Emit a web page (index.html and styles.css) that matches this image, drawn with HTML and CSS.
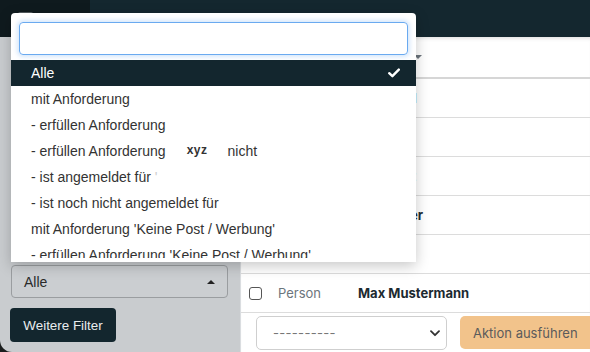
FILE: index.html
```html
<!DOCTYPE html>
<html lang="de">
<head>
<meta charset="utf-8">
<title>Filter</title>
<link rel="stylesheet" href="styles.css">
</head>
<body>
<div class="app">
  <header class="topbar">
    <div class="brand"><span class="logo"></span></div>
    <div class="topbar-rest"></div>
  </header>
  <div class="content">
    <aside class="sidebar">
      <div class="select-fake">
        <span>Alle</span>
        <span class="caret-up"></span>
      </div>
      <button class="btn-dark">Weitere Filter</button>
    </aside>
    <main class="main">
      <div class="row head">
        <span class="col-check"></span>
        <span class="col-type"></span>
        <span class="col-name">Name</span>
        <span class="sort-caret"></span>
      </div>
      <div class="row"><span class="col-check"></span><span class="col-type"></span><span class="col-name">Bernhard</span></div>
      <div class="row"><span class="col-check"></span><span class="col-type"></span><span class="col-name">Anna</span></div>
      <div class="row"><span class="col-check"></span><span class="col-type"></span><span class="col-name">Ruprecht</span></div>
      <div class="row"><span class="col-check"></span><span class="col-type"></span><span class="col-name">Alexander</span></div>
      <div class="row"><span class="col-check"></span><span class="col-type"></span><span class="col-name">Eva</span></div>
      <div class="row"><span class="col-check"><span class="checkbox"></span></span><span class="col-type">Person</span><span class="col-name">Max Mustermann</span></div>
      <div class="actions">
        <div class="action-select"><span>----------</span>
          <svg class="chev" width="10" height="7" viewBox="0 0 10 7"><path d="M1 1.2 L5 5.2 L9 1.2" fill="none" stroke="#333" stroke-width="1.8" stroke-linecap="round" stroke-linejoin="round"/></svg>
        </div>
        <button class="btn-action">Aktion ausführen</button>
      </div>
    </main>
  </div>

  <div class="dropdown">
    <div class="search-wrap"><div class="search"></div></div>
    <ul class="options">
      <li class="opt active"><span>Alle</span>
        <svg class="check" width="12" height="10" viewBox="0 0 12 10"><path d="M1.2 5.2 L4.4 8.2 L10.8 1.6" fill="none" stroke="#fff" stroke-width="2.4" stroke-linecap="round" stroke-linejoin="round"/></svg>
      </li>
      <li class="opt">mit Anforderung</li>
      <li class="opt">- erfüllen Anforderung</li>
      <li class="opt">- erfüllen Anforderung<b class="tag">xyz</b>nicht</li>
      <li class="opt">- ist angemeldet für <span class="faint">'</span></li>
      <li class="opt">- ist noch nicht angemeldet für</li>
      <li class="opt">mit Anforderung 'Keine Post / Werbung'</li>
      <li class="opt">- erfüllen Anforderung 'Keine Post / Werbung'</li>
    </ul>
  </div>
</div>
</body>
</html>
```

FILE: styles.css
```css
* { box-sizing: border-box; }
html, body { margin: 0; padding: 0; }
body {
  width: 590px;
  height: 352px;
  overflow: hidden;
  background: #1b1d1e;
  font-family: "Liberation Sans", Arial, sans-serif;
}
.app { position: relative; width: 590px; height: 352px; display: flex; flex-direction: column; }

.topbar { height: 37px; display: flex; flex: none; }
.brand { width: 90px; background: #0f1a1e; padding: 12px 0 0 18px; }
.logo { display: block; width: 15px; height: 15px; background: #535b5f; border-radius: 2px; }
.topbar-rest { flex: 1; background: #14272f; }

.content { flex: 1; display: flex; min-height: 0; }
.sidebar {
  width: 241px;
  background: #c9cccf;
  border-right: 1px solid #dadde0;
  border-bottom-left-radius: 12px;
  display: flex;
  flex-direction: column;
  justify-content: flex-end;
  gap: 10px;
  padding: 0 12px 10px 10px;
}
.select-fake {
  height: 33px;
  margin-left: 1px;
  border: 1px solid #9a9da0;
  border-radius: 4px;
  background: #cbced1;
  display: flex;
  align-items: center;
  justify-content: space-between;
  padding: 0 12px 0 12px;
  font-size: 14px;
  color: #2a2a2a;
}
.caret-up {
  width: 0; height: 0;
  border-left: 4px solid transparent;
  border-right: 4px solid transparent;
  border-bottom: 4px solid #222;
}
.btn-dark {
  align-self: flex-start;
  height: 34px;
  width: 106px;
  border: 0;
  border-radius: 4px;
  background: #13262e;
  color: #e9ecee;
  font-family: "Liberation Sans", Arial, sans-serif;
  font-size: 13.4px;
  padding: 0;
}

.main { flex: 1; background: #fff; font-family: Inter, "Liberation Sans", sans-serif; font-size: 13px; box-shadow: inset 0 4px 4px -3px rgba(0,0,0,.15); }
.row {
  height: 39px;
  display: flex;
  align-items: center;
  border-bottom: 1px solid #dcdcdc;
  padding-left: 7px;
}
.row.head { height: 42px; border-bottom: 2px solid #d6d6d6; }
.col-check { width: 30px; display: flex; }
.col-type { width: 80px; color: #6c757d; }
.col-name { font-weight: 700; color: #1c2a30; }
.head .col-name { width: 56px; }
.sort-caret {
  width: 0; height: 0;
  border-left: 4px solid transparent;
  border-right: 4px solid transparent;
  border-top: 4px solid #6c757d;
}
.checkbox { width: 13px; height: 13px; border: 1px solid #555; border-radius: 3px; background: #fff; margin-left: 1px; }

.actions { display: flex; gap: 13px; padding: 3px 0 0 15px; }
.action-select {
  width: 191px;
  height: 34px;
  border: 1px solid #cfcfcf;
  border-radius: 5px;
  display: flex;
  align-items: center;
  justify-content: space-between;
  padding: 0 6px 0 16px;
  color: #777;
  font-size: 13px;
  letter-spacing: 0.3px;
}
.btn-action {
  height: 33px;
  flex: 1;
  border: 0;
  border-radius: 5px 0 0 5px;
  background: #f2c38b;
  color: #5b5b5b;
  font-family: Inter, "Liberation Sans", sans-serif;
  font-size: 13px;
  text-align: left;
  padding: 0 0 0 13px;
}

.dropdown {
  position: absolute;
  left: 11px;
  top: 13px;
  width: 405px;
  height: 249px;
  background: #fff;
  border-radius: 4px 4px 0 0;
  box-shadow: 0 4px 14px rgba(0,0,0,.22);
  overflow: hidden;
}
.search-wrap { padding: 9px 8px 5px 8px; }
.search {
  height: 33px;
  border: 1px solid #6aaaf0;
  border-radius: 4px;
  box-shadow: 0 0 4px 2px rgba(105,170,240,.28);
}
.options { list-style: none; margin: 0; padding: 0; height: 198px; overflow: hidden; }
.opt {
  height: 26px;
  display: flex;
  align-items: center;
  padding-left: 20px;
  font-size: 14px;
  color: #333;
  white-space: pre;
}
.opt.active { background: #13262e; color: #fff; justify-content: space-between; padding-right: 16px; }
.tag { font-size: 12px; letter-spacing: 0.5px; margin: 0 20px 3px 21px; font-weight: 700; }
.faint { color: #ccc; }
```
